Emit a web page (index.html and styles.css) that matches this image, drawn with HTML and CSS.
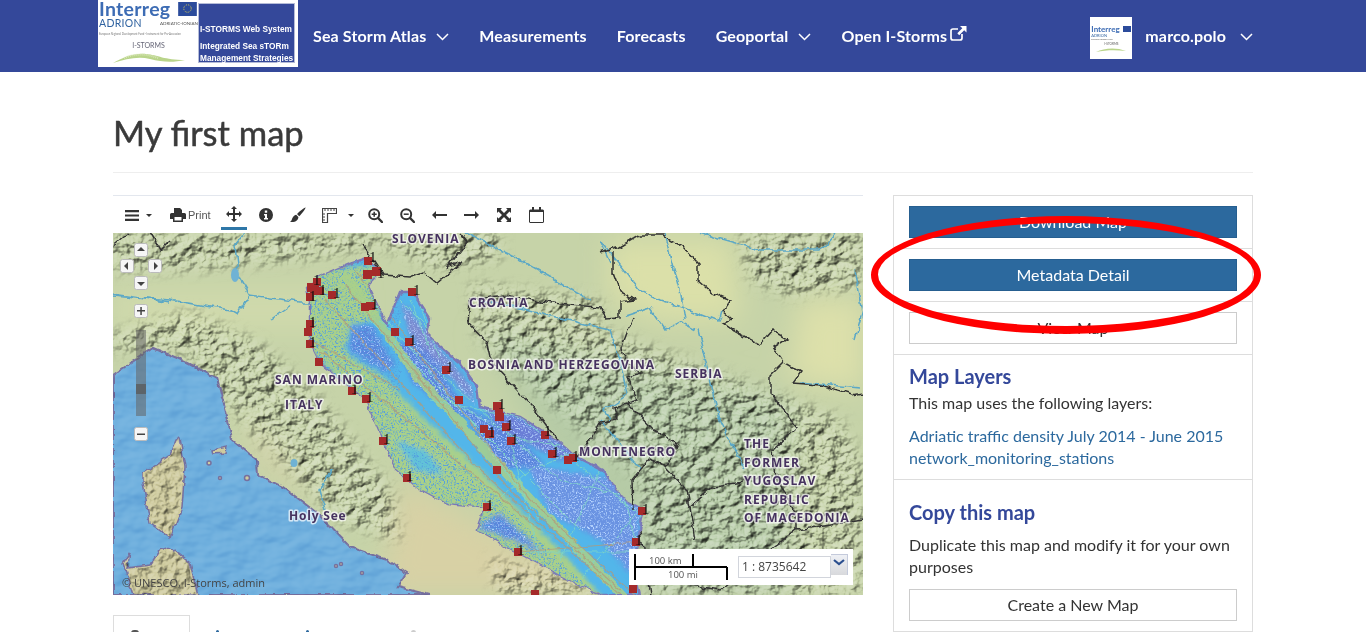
FILE: index.html
```html
<!DOCTYPE html>
<html lang="en">
<head>
<meta charset="utf-8">
<title>My first map</title>
<link rel="stylesheet" href="styles.css">
</head>
<body>
<header class="topbar">
  <a class="logo">
    <div class="logo-left">
      <div class="logo-row1"><span class="logo-interreg">Interreg</span><svg class="logo-flag" viewBox="0 0 20 15"><rect width="20" height="15" fill="#2b4b9b"/><circle cx="10" cy="7" r="4" fill="none" stroke="#e8d44a" stroke-width="1" stroke-dasharray="1 1.1"/></svg></div>
      <div class="logo-row2"><span class="logo-adrion">ADRION</span><span class="logo-ai">ADRIATIC-IONIAN</span></div>
      <div class="logo-micro">European Regional Development Fund - Instrument for Pre-Accession</div>
      <div class="logo-istorms">I-STORMS</div>
      <svg class="logo-wave" viewBox="0 0 74 13"><path d="M1 12C12 6 22 2 34 3S52 9 73 9C60 12 50 11 38 8S14 8 1 12Z" fill="#b9d48a"/><path d="M12 7C24 2 36 3 46 7" fill="none" stroke="#d8e6b8" stroke-width="2" stroke-dasharray="1 1"/></svg>
    </div>
    <div class="logo-box">
      <div class="logo-sys">I-STORMS Web System</div>
      <div class="logo-int">Integrated Sea sTORm<br>Management Strategies</div>
    </div>
  </a>
  <nav class="nav">
    <a class="nav-item">Sea Storm Atlas<svg class="chev" viewBox="0 0 13 8"><path d="M1 1l5.500 5.500L12 1"/></svg></a>
    <a class="nav-item">Measurements</a>
    <a class="nav-item">Forecasts</a>
    <a class="nav-item">Geoportal<svg class="chev" viewBox="0 0 13 8"><path d="M1 1l5.500 5.500L12 1"/></svg></a>
    <a class="nav-item nav-ext">Open I-Storms<svg class="ext" viewBox="0 0 17 16"><path d="M12 9v4a2 2 0 0 1-2 2H3a2 2 0 0 1-2-2V6a2 2 0 0 1 2-2h5" fill="none" stroke="#fff" stroke-width="1.700"/><path d="M10 1h6.500v6.500l-2.300-2.300-5 5-1.900-1.900 5-5z" fill="#fff"/></svg></a>
  </nav>
  <div class="user">
    <div class="avatar">
      <div class="av-row"><span class="av-int">Interreg</span><i class="av-flag"></i></div>
      <div class="av-adr">ADRION</div>
      <div class="av-micro">European Regional Fund</div>
      <div class="av-ist">I-STORMS</div>
      <svg class="av-wave" viewBox="0 0 30 5"><path d="M0 5C8 1 20 0 30 4 20 3 10 3 0 5Z" fill="#b9d48a"/></svg>
    </div>
    <a class="nav-item">marco.polo<svg class="chev" viewBox="0 0 13 8"><path d="M1 1l5.500 5.500L12 1"/></svg></a>
  </div>
</header>

<main class="page">
  <h1 class="title">My first map</h1>
  <div class="columns">
    <section class="viewer">
      <div class="toolbar">
        <span class="tb tb-menu"><svg width="14" height="11" viewBox="0 0 14 11"><path d="M0 0h14v2.200H0zM0 4.400h14v2.200H0zM0 8.800h14V11H0z" fill="#333"/></svg><i class="caret"></i></span>
        <span class="tb tb-print"><svg width="16" height="14" viewBox="0 0 16 14"><path d="M4 0h6l2 2v3H4zM1.500 5h13A1.500 1.500 0 0 1 16 6.500V11h-3v3H3v-3H0V6.500A1.500 1.500 0 0 1 1.500 5zM4.500 9v3.500h7V9z" fill="#333" fill-rule="evenodd"/></svg><span class="print-label">Print</span></span>
        <span class="tb tb-active"><svg width="16" height="16" viewBox="0 0 16 16"><path d="M8 0l3 3H9v4h4V5l3 3-3 3V9H9v4h2l-3 3-3-3h2V9H3v2L0 8l3-3v2h4V3H5z" fill="#333"/></svg></span>
        <span class="tb"><svg width="14" height="14" viewBox="0 0 14 14"><path d="M7 0a7 7 0 1 1 0 14A7 7 0 0 1 7 0zM5.800 2.500v2.200h2.400V2.500zM5 6v1.400h1V10H5v1.400h4V10H8V6z" fill="#333" fill-rule="evenodd"/></svg></span>
        <span class="tb"><svg width="16" height="16" viewBox="0 0 16 16"><path d="M15.500.5c.6.6-4 6.700-6.300 8.700L7 7C9 4.700 15 0 15.500.5zM6.200 7.800l2.200 2.200C8.300 13 6 15.500 0 15c2-1 1.500-3 3-5 .8-1.200 2-2 3.200-2.200z" fill="#333"/></svg></span>
        <span class="tb tb-ruler"><svg width="15" height="15" viewBox="0 0 15 15"><path d="M.5.500h14v5h-9v9h-5z" fill="none" stroke="#444" stroke-width="1.200"/><path d="M3 1v2M6 1v2M9 1v2M12 1v2M1 6h2M1 9h2M1 12h2" stroke="#444"/></svg><i class="caret"></i></span>
        <span class="tb"><svg width="15" height="15" viewBox="0 0 15 15"><circle cx="6.200" cy="6.200" r="5" fill="none" stroke="#333" stroke-width="2"/><path d="M10 10l4 4" stroke="#333" stroke-width="2.400" stroke-linecap="round"/><path d="M3.700 6.200h5M6.200 3.700v5" stroke="#333" stroke-width="1.500"/></svg></span>
        <span class="tb"><svg width="15" height="15" viewBox="0 0 15 15"><circle cx="6.200" cy="6.200" r="5" fill="none" stroke="#333" stroke-width="2"/><path d="M10 10l4 4" stroke="#333" stroke-width="2.400" stroke-linecap="round"/><path d="M3.700 6.200h5" stroke="#333" stroke-width="1.500"/></svg></span>
        <span class="tb"><svg width="15" height="8" viewBox="0 0 15 8"><path d="M0 4l4-4v3h11v2H4v3z" fill="#333"/></svg></span>
        <span class="tb"><svg width="15" height="8" viewBox="0 0 15 8"><path d="M15 4l-4-4v3H0v2h11v3z" fill="#333"/></svg></span>
        <span class="tb tb-wide"><svg width="14" height="14" viewBox="0 0 14 14"><path d="M0 0h5L3.500 1.500 7 5l3.500-3.500L9 0h5v5l-1.500-1.500L9 7l3.500 3.500L14 9v5H9l1.500-1.500L7 9l-3.500 3.500L5 14H0V9l1.500 1.500L5 7 1.500 3.500 0 5z" fill="#333"/></svg></span>
        <span class="tb"><svg width="15" height="16" viewBox="0 0 15 16"><path d="M1 3h13a.5.5 0 0 1 .5.5V15a.5.5 0 0 1-.5.500H1a.5.5 0 0 1-.5-.500V3.500A.5.5 0 0 1 1 3z" fill="none" stroke="#333"/><path d="M.5 3h14v2H.5zM3 0h2v4H3zM10 0h2v4h-2z" fill="#333"/></svg></span>
      </div>
      <div class="map">
        <svg class="map-svg" viewBox="113 233 750 362" width="750" height="362" xmlns="http://www.w3.org/2000/svg">
          <defs>
            <filter id="hill" x="0" y="0" width="100%" height="100%" color-interpolation-filters="sRGB">
              <feTurbulence type="fractalNoise" baseFrequency=".085 .1" numOctaves="4" seed="7" result="n"/>
              <feDiffuseLighting in="n" surfaceScale="5" diffuseConstant=".68" lighting-color="#fff" result="l"><feDistantLight azimuth="225" elevation="50"/></feDiffuseLighting>
              <feGaussianBlur in="SourceAlpha" stdDeviation="7" result="b"/>
              <feComposite in="l" in2="b" operator="in"/>
            </filter>
            <filter id="isle-hill" x="0" y="0" width="100%" height="100%" color-interpolation-filters="sRGB">
              <feTurbulence type="fractalNoise" baseFrequency=".09" numOctaves="4" seed="11" result="n"/>
              <feDiffuseLighting in="n" surfaceScale="4" diffuseConstant=".65" lighting-color="#fff" result="l"><feDistantLight azimuth="225" elevation="50"/></feDiffuseLighting>
              <feComposite in="l" in2="SourceAlpha" operator="in"/>
            </filter>
            <filter id="seahill" x="0" y="0" width="100%" height="100%" color-interpolation-filters="sRGB">
              <feTurbulence type="fractalNoise" baseFrequency=".03 .05" numOctaves="3" seed="3" result="n"/>
              <feDiffuseLighting in="n" surfaceScale="4" diffuseConstant=".65" lighting-color="#fff" result="l"><feDistantLight azimuth="225" elevation="50"/></feDiffuseLighting>
              <feComposite in="l" in2="SourceAlpha" operator="in"/>
            </filter>
            <filter id="soft" x="-20%" y="-20%" width="140%" height="140%"><feGaussianBlur stdDeviation="14"/></filter>
            <filter id="soft2" x="-20%" y="-20%" width="140%" height="140%"><feGaussianBlur stdDeviation="2.500"/></filter>
            <filter id="wiggle" x="-2%" y="-2%" width="104%" height="104%">
              <feTurbulence type="fractalNoise" baseFrequency=".09" numOctaves="3" seed="9" result="w"/>
              <feDisplacementMap in="SourceGraphic" in2="w" scale="7" xChannelSelector="R" yChannelSelector="G"/>
            </filter>
            <filter id="wiggle2" x="-2%" y="-2%" width="104%" height="104%">
              <feTurbulence type="fractalNoise" baseFrequency=".12" numOctaves="3" seed="2" result="w"/>
              <feDisplacementMap in="SourceGraphic" in2="w" scale="5" xChannelSelector="R" yChannelSelector="G"/>
            </filter>
            <filter id="speck" x="0" y="0" width="100%" height="100%" color-interpolation-filters="sRGB">
              <feTurbulence type="fractalNoise" baseFrequency=".75" numOctaves="2" seed="5"/>
              <feColorMatrix values="0 0 0 0 .72  0 0 0 0 .84  0 0 0 0 1  2.500 2.500 0 0 -2.500"/>
              <feComposite in2="SourceAlpha" operator="in"/>
            </filter>
            <filter id="speck2" x="0" y="0" width="100%" height="100%" color-interpolation-filters="sRGB">
              <feTurbulence type="fractalNoise" baseFrequency=".6" numOctaves="2" seed="8"/>
              <feColorMatrix values="0 0 0 0 .33  0 0 0 0 .62  0 0 0 0 .88  3 3 0 0 -3"/>
              <feComposite in2="SourceAlpha" operator="in"/>
            </filter>
            <clipPath id="adri"><path d="M307 288L317 278 347 265 367 258 380 272 367 285 380 312 387 325 400 292 413 292 430 318 427 335 460 363 477 387 480 407 520 417 557 440 577 457 603 470 620 497 643 510 640 530 633 563 640 595H600L560 575 517 552 477 530 483 513 490 507 447 503 417 487 397 470 383 440 365 398 320 363 310 343 310 322 310 302Z"/></clipPath>
          </defs>

          <rect class="land" x="113" y="233" width="750" height="362"/>
          <g filter="url(#soft)">
            <rect x="113" y="290" width="240" height="40" fill="#d0daac"/>
            <path d="M610 240H730L740 320 660 320 610 300Z" fill="#dbe0a9"/>
            <path d="M800 300H863V390L790 380Z" fill="#dde0aa"/>
            <path d="M400 480L520 545 640 595H380Z" fill="#d8d1a5"/>
            <path d="M240 410L290 470 320 510 260 460Z" fill="#d8d1a8"/>
            <path d="M480 330L790 400V595H640L540 440Z" fill="#b6cba6"/>
          </g>
          <g class="hills" filter="url(#hill)">
            <path d="M113 233H500V258L440 268 380 245 300 258 200 268 113 270Z"/>
            <path d="M113 335L190 312 260 345 320 400 390 490 400 540 340 520 260 440 180 350 113 350Z"/>
            <path d="M470 285L600 300 600 330 790 400 840 420 863 470V595H650L640 480 560 410 480 340Z"/>
            <path d="M740 233H863V285L790 295 750 280Z"/>
            <path d="M490 560L640 595H500Z"/>
          </g>

          <g filter="url(#wiggle2)">
            <path class="sea" d="M113 375L153 348 177 358 217 378 228 420 232 440 257 460 258 475 283 487 317 513 350 547 387 560 407 573 398 587 430 595H113Z"/>
          </g>
          <path class="sea-hills" filter="url(#seahill)" d="M113 375L153 348 177 358 217 378 228 420 232 440 257 460 258 475 283 487 317 513 350 547 387 560 407 573 398 587 430 595H113Z"/>
          <g filter="url(#wiggle2)">
            <path class="isle" d="M143 473L170 455 176 440 180 438 185 467 182 507 170 538 150 523 143 483Z"/>
            <path class="isle" d="M170 547L190 563 198 595H133L123 563 130 553 127 568 150 565 160 550Z"/>
            <path class="isle" d="M212 450L227 447 226 453 213 454Z"/>
          </g>
          <g class="isle-shade" filter="url(#isle-hill)">
            <path d="M145 473L170 457 176 442 180 440 183 467 180 507 170 536 152 523 145 483Z"/>
            <path d="M170 549L188 563 196 595H135L125 563 130 556 129 570 150 567 160 552Z"/>
          </g>
          <circle class="isle" cx="209" cy="463" r="2"/><circle class="isle" cx="220" cy="478" r="1.500"/><circle class="isle" cx="247" cy="478" r="2.500"/>
          <circle class="isle" cx="336" cy="566" r="1.500"/><circle class="isle" cx="341" cy="564" r="1.500"/><circle class="isle" cx="362" cy="573" r="1.500"/>

          <g class="rivers" filter="url(#wiggle)">
            <path d="M113 295L170 300 230 310 238 315 250 295 300 302 310 302"/>
            <path d="M113 293L140 297 170 302M238 275L235 245 245 233M250 295L240 278M270 320L290 306"/>
            <path d="M600 240L620 265 640 290 660 300 690 310 720 322 723 310M665 233L680 290 685 320M698 330L720 420 745 470"/>
            <path d="M625 316L650 308 665 330 680 322 695 330"/>
            <path d="M700 233L760 250 820 250 835 233M855 270L870 350M863 310L855 340"/>
            <path d="M480 300L560 318 610 330 620 360 627 395 605 410 610 420M600 240L610 262"/>
            <path d="M333 470L320 490 325 510M600 420L625 450 640 470M800 382L860 388"/>
            <path d="M465 233L520 260 590 300"/>
          </g>
          <ellipse class="lake" cx="235" cy="275" rx="4" ry="7"/>
          <ellipse class="lake" cx="294" cy="463" rx="3.500" ry="4"/>

          <g filter="url(#wiggle2)">
            <path class="coast-a" d="M307 288L317 278 347 265 367 258 380 272 367 285 380 312 387 325 400 292 413 292 430 318 427 335 460 363 477 387 480 407 520 417 557 440 577 457 603 470 620 497 643 510 640 530 633 563 640 595H600L560 575 517 552 477 530 483 513 490 507 447 503 417 487 397 470 383 440 365 398 320 363 310 343 310 322 310 302Z"/>
            <g clip-path="url(#adri)">
              <g filter="url(#soft2)">
                <path d="M300 270L380 265 378 318 350 325 345 352 385 378 420 415 470 460 560 550 640 640 540 600 470 535 380 475 340 380 300 340Z" fill="#a9d08a"/>
                <path d="M395 440L425 450 445 475 415 470Z" fill="#62c2d8"/>
                <path d="M352 326L372 326 395 365 385 372 350 350Z" fill="#5a84dc"/>
                <path d="M396 345L425 340 455 395 470 420 450 410 415 385Z" fill="#5a84dc"/>
                <path d="M460 405L510 430 545 465 500 470Z" fill="#5a84dc"/>
                <path d="M527 465L617 480 640 513 633 577 600 540 550 513Z" fill="#6a93e2"/>
                <path d="M477 527L500 513 545 555 513 540Z" fill="#5a84dc"/>
                <path d="M400 300L425 330 470 385 475 405 440 365 410 335Z" fill="#7a8ad0"/>
                <path d="M480 407L520 417 557 440 577 457 560 460 510 435Z" fill="#6a7ed6"/>
              </g>
              <path class="specks" d="M352 326L372 326 395 365 385 372 350 350ZM396 345L425 340 455 395 470 420 450 410 415 385ZM527 465L617 480 640 513 633 577 600 540 550 513ZM400 300L425 330 470 385 475 405 440 365 410 335ZM477 527L500 513 545 555 513 540ZM460 405L510 430 545 465 500 470ZM480 407L520 417 557 440 577 457 560 460 510 435Z" filter="url(#speck)"/>
              <path class="specks" d="M300 260H400V400L560 560 640 640H520L300 400Z" filter="url(#speck2)"/>
              <path class="band" d="M345 275L420 380 560 530 650 625"/>
              <g class="traffic-green">
                <path d="M400 300L500 400 645 520M430 400L640 440M370 320L470 420 540 520M600 470L560 560M620 480L640 560M480 410L560 480 640 500M490 507L530 470 600 440M518 552H640M640 510L580 580M510 440L540 560M400 320L395 345M420 305L440 360"/>
                <path d="M370 300L470 420 580 530M380 320L470 400M410 300L430 350M460 410L500 450M440 395L520 440 560 445"/>
              </g>
              <g class="traffic-tan">
                <path d="M325 300L480 470 620 595M345 285L510 490 620 590M355 270L530 500 640 600"/>
                <path d="M320 350L420 430 540 530M310 340L400 390M518 552L640 542"/>
              </g>
            </g>
          </g>

          <g class="borders" filter="url(#wiggle)">
            <path d="M600 253L620 247 640 235 663 235 683 247 698 263 698 280 713 293 730 300 723 310 732 318 723 323 737 333 760 345 773 330 787 338 773 347 783 362 800 372 792 383 820 385 853 395 863 393"/>
            <path d="M783 362L770 375 770 393 797 427 773 450 777 477 797 517 797 530"/>
            <path d="M613 253L613 273 620 292 635 300 620 302 620 317 607 318 600 307 567 305 533 300M633 318L622 347 625 363 643 373 627 377 638 400 613 407 617 420 600 422 590 440 577 457"/>
            <path d="M627 403L653 430 677 443 672 457 665 467 687 490 690 507 713 487 743 483M665 467L650 458 632 480 633 510"/>
            <path d="M470 300L468 323 487 343 490 357 500 372 533 407 557 440"/>
            <path d="M533 300L505 295 470 300"/>
            <path d="M363 245L372 258 383 275 410 277 423 272 437 283 463 262 447 268 467 242 460 233"/>
            <path d="M113 245L128 233M150 233L160 250 170 240M690 507L695 540M640 530L650 595M690 585L720 590 797 530 863 520"/>
          </g>

          <g class="pins">
            <g><rect x="364" y="257" width="8" height="8"/><text x="369" y="262">1</text></g>
            <rect x="363" y="270" width="9" height="9"/><g><rect x="372" y="267" width="9" height="9"/><text x="377" y="278">1</text></g>
            <rect x="307" y="283" width="9" height="9"/><rect x="310" y="286" width="9" height="9"/><g><rect x="313" y="278" width="8" height="8"/><text x="313" y="285">1</text></g>
            <g><rect x="306" y="293" width="8" height="8"/><text x="309" y="301">1</text></g>
            <g><rect x="316" y="287" width="8" height="8"/><text x="319" y="295">1</text></g>
            <g><rect x="328" y="291" width="8" height="8"/><text x="333" y="298">1</text></g>
            <rect x="361" y="303" width="8" height="8"/><g><rect x="366" y="302" width="9" height="8"/><text x="371" y="309">1</text></g>
            <g><rect x="408" y="288" width="8" height="8"/><text x="413" y="295">1</text></g>
            <rect x="391" y="328" width="8" height="8"/>
            <g><rect x="405" y="338" width="8" height="8"/><text x="409" y="345">1</text></g>
            <g><rect x="306" y="320" width="8" height="8"/><text x="309" y="327">1</text></g>
            <rect x="304" y="328" width="8" height="8"/>
            <g><rect x="306" y="340" width="8" height="8"/><text x="309" y="347">1</text></g>
            <rect x="315" y="358" width="8" height="8"/>
            <g><rect x="442" y="366" width="8" height="8"/><text x="446" y="372">1</text></g>
            <rect x="455" y="396" width="8" height="8"/>
            <g><rect x="348" y="387" width="8" height="8"/><text x="351" y="394">1</text></g>
            <g><rect x="362" y="395" width="8" height="8"/><text x="366" y="402">1</text></g>
            <g><rect x="379" y="437" width="8" height="8"/><text x="383" y="444">1</text></g>
            <g><rect x="493" y="402" width="9" height="8"/><text x="498" y="409">1</text></g>
            <rect x="495" y="413" width="9" height="8"/><rect x="495" y="409" width="8" height="8"/>
            <g><rect x="502" y="423" width="8" height="8"/><text x="506" y="430">1</text></g>
            <rect x="480" y="425" width="8" height="8"/>
            <g><rect x="485" y="430" width="9" height="8"/><text x="488" y="437">1</text></g>
            <g><rect x="507" y="437" width="8" height="8"/><text x="511" y="444">1</text></g>
            <g><rect x="541" y="431" width="8" height="8"/><text x="544" y="436">1</text></g>
            <g><rect x="548" y="450" width="8" height="8"/><text x="552" y="457">1</text></g>
            <rect x="564" y="456" width="8" height="8"/><g><rect x="569" y="454" width="8" height="8"/><text x="572" y="461">1</text></g>
            <rect x="493" y="466" width="8" height="8"/>
            <g><rect x="403" y="474" width="8" height="8"/><text x="406" y="481">1</text></g>
            <g><rect x="483" y="503" width="8" height="8"/><text x="486" y="510">1</text></g>
            <g><rect x="514" y="548" width="8" height="8"/><text x="517" y="555">1</text></g>
            <g><rect x="638" y="507" width="8" height="8"/><text x="642" y="514">1</text></g>
            <g><rect x="632" y="538" width="8" height="8"/><text x="635" y="545">1</text></g>
            <rect x="629" y="585" width="8" height="8"/>
            <rect x="531" y="590" width="8" height="8"/>
          </g>

          <g class="labels">
            <text x="392" y="243">SLOVENIA</text>
            <text x="469" y="307">CROATIA</text>
            <text x="468" y="369">BOSNIA AND HERZEGOVINA</text>
            <text x="675" y="378">SERBIA</text>
            <text x="579" y="456">MONTENEGRO</text>
            <text x="744" y="448">THE</text>
            <text x="744" y="467">FORMER</text>
            <text x="744" y="485">YUGOSLAV</text>
            <text x="744" y="504">REPUBLIC</text>
            <text x="744" y="522">OF MACEDONIA</text>
            <text x="275" y="384">SAN MARINO</text>
            <text x="285" y="409">ITALY</text>
            <text x="289" y="520" class="label-lower">Holy See</text>
          </g>

          <g class="pan">
            <rect x="134.500" y="243.500" width="13" height="13" rx="2"/><path class="ar" d="M141 247l4 4h-8z"/>
            <rect x="120.500" y="259.500" width="13" height="13" rx="2"/><path class="ar" d="M124 266l4-4v8z"/>
            <rect x="148.500" y="259.500" width="13" height="13" rx="2"/><path class="ar" d="M158 266l-4-4v8z"/>
            <rect x="134.500" y="276.500" width="13" height="13" rx="2"/><path class="ar" d="M141 286l4-4h-8z"/>
            <rect x="134.500" y="304.500" width="13" height="13" rx="2"/><path class="ar" d="M137 310h8v1.500h-8zM140.300 307h1.500v8h-1.500z"/>
            <rect x="134.500" y="427.500" width="13" height="13" rx="2"/><path class="ar" d="M137 433.500h8v1.500h-8z"/>
            <rect class="zoombar" x="136" y="330" width="10" height="86"/>
            <rect class="zoomhandle" x="136" y="384" width="10" height="10"/>
          </g>
          <text class="attrib" x="122" y="587">© UNESCO, I-Storms, admin</text>
        </svg>
        <div class="scale-box">
          <svg class="scale-svg" width="96" height="30" viewBox="0 0 96 30"><path d="M2 0v26M2 13h92M60 0v13M94 13v13" fill="none" stroke="#000" stroke-width="2"/><text x="16" y="10">100 km</text><text x="35" y="24">100 mi</text></svg>
          <div class="scale-combo"><span class="scale-input">1 : 8735642</span><span class="scale-btn"><svg width="12" height="7" viewBox="0 0 12 7"><path d="M1 1l5 4 5-4" fill="none" stroke="#2b4f8f" stroke-width="2.200"/></svg></span></div>
        </div>
      </div>
      <div class="tabs">
        <div class="tab tab-on"><i class="tab-dot tab-dark"></i></div>
        <div class="tab tab-1"><i class="tab-dot tab-blue"></i></div>
        <div class="tab tab-2"><i class="tab-dot tab-blue"></i></div>
        <div class="tab tab-3"><i class="tab-dot tab-grey"></i></div>
      </div>
    </section>

    <aside class="side">
      <div class="side-sec"><a class="btn btn-primary">Download Map</a></div>
      <div class="side-sec"><a class="btn btn-primary">Metadata Detail</a></div>
      <div class="side-sec"><a class="btn btn-plain">View Map</a></div>
      <div class="side-sec side-layers">
        <h3 class="side-h">Map Layers</h3>
        <p class="side-p">This map uses the following layers:</p>
        <a class="side-link">Adriatic traffic density July 2014 - June 2015</a>
        <a class="side-link">network_monitoring_stations</a>
      </div>
      <div class="side-sec side-copy">
        <h3 class="side-h">Copy this map</h3>
        <p class="side-p side-p2">Duplicate this map and modify it for your own purposes</p>
        <a class="btn btn-plain">Create a New Map</a>
      </div>
    </aside>
  </div>
</main>

<svg class="annotation" width="1366" height="632" viewBox="0 0 1366 632"><path fill="#f00" fill-rule="evenodd" d="M871 275a195 59 0 1 0 390 0a195 59 0 1 0-390 0ZM878 274.500a188 51.500 0 1 1 376 0a188 51.500 0 1 1-376 0Z"/></svg>
</body>
</html>
```

FILE: styles.css
```css
html, body { margin: 0; padding: 0; height: 632px; overflow: hidden; background: #fff; }
body { font-family: Lato, "Open Sans", sans-serif; font-size: 16px; color: #333; position: relative; }
a { text-decoration: none; color: inherit; }

.topbar { height: 72px; background: #34489a; display: flex; align-items: flex-start; padding: 0 113px 0 98px; color: #fff; }

.logo { width: 200px; height: 67px; background: #fff; display: flex; flex: none; }
.logo-left { width: 100px; padding: 1px 0 0 1px; box-sizing: border-box; }
.logo-row1 { display: flex; justify-content: space-between; align-items: flex-start; height: 17px; padding-right: 1px; }
.logo-interreg { font-size: 19.500px; font-weight: 700; line-height: 16px; color: #3d6cb4; letter-spacing: .3px; }
.logo-flag { width: 19px; height: 14px; margin-top: 1px; }
.logo-row2 { display: flex; justify-content: space-between; align-items: center; height: 11px; }
.logo-adrion { font-size: 10.500px; line-height: 11px; color: #2f62a0; letter-spacing: .3px; }
.logo-ai { font-size: 4.500px; color: #555; white-space: nowrap; }
.logo-micro { font-size: 2.700px; color: #777; line-height: 6px; margin-top: 2px; white-space: nowrap; }
.logo-istorms { font-size: 7px; color: #667; text-align: center; line-height: 8px; margin-top: 4px; }
.logo-wave { display: block; width: 74px; height: 13px; margin: 2px 0 0 13px; }
.logo-box { width: 97px; height: 60px; margin: 3px 0 0 0; background: #34489a; border: 1px solid #b5bcd8; box-sizing: border-box; font-family: "Liberation Sans", sans-serif; font-weight: 700; color: #fff; padding: 20px 0 0 1px; white-space: nowrap; }
.logo-sys { font-size: 8.300px; line-height: 11px; }
.logo-int { font-size: 8.300px; line-height: 12px; margin-top: 5px; }

.nav { display: flex; gap: 30px; margin-left: 15px; height: 70px; align-items: center; }
.nav-item { font-size: 16px; font-weight: 700; letter-spacing: .14px; color: #fff; display: flex; align-items: center; white-space: nowrap; }
.chev { width: 13px; height: 8px; margin: 3px 0 0 10px; fill: none; stroke: #fff; stroke-width: 1.500; }
.ext { width: 17px; height: 16px; margin: -4px 0 0 3px; }

.user { margin-left: auto; display: flex; align-items: center; height: 70px; gap: 13px; }
.user .chev { margin-left: 14px; }
.avatar { width: 42px; height: 42px; background: #fff; box-sizing: border-box; padding: 8px 1px 0; overflow: hidden; color: #555; margin-top: 6px; }
.av-row { display: flex; justify-content: space-between; align-items: center; height: 8px; }
.av-int { font-size: 8px; font-weight: 700; color: #3d6cb4; line-height: 8px; }
.av-flag { display: block; width: 8px; height: 6px; background: #2b4b9b; }
.av-adr { font-size: 4px; line-height: 5px; color: #2f62a0; }
.av-micro { font-size: 2px; line-height: 3px; white-space: nowrap; }
.av-ist { font-size: 3px; line-height: 5px; text-align: center; margin-top: 1px; }
.av-wave { display: block; width: 30px; height: 5px; margin: 0 auto; }

.page { width: 1140px; margin: 0 auto; }
.title { margin: 0; padding: 41px 0 19px; font-size: 34.500px; line-height: 40px; font-weight: 400; -webkit-text-stroke: .5px #3a3a3a; color: #3a3a3a; border-bottom: 1px solid #eee; }
.columns { display: flex; gap: 30px; align-items: flex-start; margin-top: 22px; }

.viewer { width: 750px; flex: none; }
.toolbar { height: 37px; border-top: 1px solid #e3e7ee; display: flex; align-items: center; }
.tb { width: 32px; height: 37px; flex: none; display: flex; align-items: center; justify-content: center; box-sizing: border-box; padding-top: 1px; }
.tb-menu { width: 44px; justify-content: flex-start; padding-left: 12px; gap: 7px; }
.tb-print { width: 61px; justify-content: flex-start; padding-left: 13px; gap: 2px; }
.print-label { font: 11px "Liberation Sans", sans-serif; color: #555; }
.tb-active { box-shadow: inset 0 -3px 0 #2e77a8; width: 26px; margin: 0 3px 3px; height: 34px; }
.tb-ruler { width: 45px; justify-content: flex-start; padding-left: 8px; gap: 11px; }
.tb-wide { width: 33px; }
.caret { display: block; width: 0; height: 0; border: 3px solid transparent; border-top: 3px solid #333; border-bottom: 0; }

.map { width: 750px; height: 362px; position: relative; overflow: hidden; background: #c5d0a0; }
.map-svg { display: block; }
.land { fill: #c6d3a8; }
.hills { fill: #000; mix-blend-mode: hard-light; opacity: .8; }
.sea { fill: #70b0de; stroke: #76709f; stroke-width: 2; }
.sea-hills { mix-blend-mode: soft-light; opacity: .6; }
.isle { fill: #cfcb9e; stroke: #76709f; stroke-width: 1.500; }
.isle-shade { mix-blend-mode: hard-light; opacity: .7; }
.rivers path { fill: none; stroke: #5ca8c6; stroke-width: 1.500; }
.lake { fill: #6fb2d4; }
.coast-a { fill: #52b6ea; stroke: #7a78b6; stroke-width: 2.500; }
.specks { fill: #000; }
.band { fill: none; stroke: #a9d08a; stroke-width: 9; opacity: .85; }
.traffic-green path { fill: none; stroke: #7fd6c6; stroke-width: 1; opacity: .85; }
.traffic-tan path { fill: none; stroke: #b39a78; stroke-width: 1.200; opacity: .75; }
.borders path { fill: none; stroke: #333; stroke-width: 1.500; }
.pins rect { fill: #a52a2a; }
.pins text { font: 15px "Liberation Serif", serif; fill: #111; }
.labels text { font: 700 12px "Open Sans", sans-serif; letter-spacing: 1px; fill: #46325f; stroke: rgba(255,255,255,.7); stroke-width: 3px; paint-order: stroke; stroke-linejoin: round; }
.labels .label-lower { letter-spacing: .8px; }
.pan rect { fill: #f6f6f6; stroke: #bbb; }
.pan .ar { fill: #444; }
.pan .zoombar { fill: rgba(100,100,100,.55); stroke: none; }
.pan .zoomhandle { fill: rgba(90,90,90,.75); stroke: none; }
.attrib { font: 11px "Open Sans", sans-serif; fill: #444; }

.scale-box { position: absolute; left: 516px; top: 316px; width: 224px; height: 36px; background: #fff; display: flex; align-items: flex-start; }
.scale-svg { flex: none; margin: 5px 0 0 4px; }
.scale-svg text { font: 9.500px "Open Sans", sans-serif; fill: #555; }
.scale-combo { display: flex; margin: 5px 0 0 9px; align-items: flex-start; }
.scale-input { width: 93px; height: 22px; box-sizing: border-box; border: 1px solid #d2d5dc; font: 12px "Open Sans", sans-serif; color: #444; line-height: 20px; padding-left: 3px; margin-top: 2px; }
.scale-btn { width: 17px; height: 21px; box-sizing: border-box; border: 1px solid #c4cadb; border-bottom: 0; border-left: 0; background: linear-gradient(#eef0f5, #d8d9dc); display: flex; justify-content: center; padding-top: 4px; }

.tabs { display: flex; margin-top: 20px; height: 60px; }
.tab { height: 60px; box-sizing: border-box; padding-top: 15px; }
.tab-on { width: 77px; border: 1px solid #ddd; border-bottom: 0; padding: 14px 0 0 17px; }
.tab-1 { margin-left: 26px; width: 90px; }
.tab-2 { width: 105px; }
.tab-3 { width: 20px; }
.tab-dot { display: block; width: 5px; height: 4px; border-radius: 3px 3px 0 0; }
.tab-dark { width: 8px; background: #555; }
.tab-blue { width: 3px; background: #2c699e; }
.tab-grey { background: #ccc; }

.side { width: 360px; flex: none; box-sizing: border-box; border: 1px solid #ddd; border-bottom: 0; }
.side-sec { padding: 10px 15px; border-bottom: 1px solid #ddd; }
.btn { display: block; height: 32px; box-sizing: border-box; line-height: 30px; text-align: center; font-size: 16px; border: 1px solid #ccc; color: #333; }
.btn-primary { background: #2c699e; border-color: #265f90; color: #fff; }
.side-layers { padding-top: 10px; }
.side-h { margin: 0; font-size: 20px; line-height: 22px; font-weight: 700; color: #34489a; }
.side-p { margin: 5px 0 11px; line-height: 22px; font-size: 16px; color: #333; }
.side-link { display: block; color: #2c699e; line-height: 22px; font-size: 16px; white-space: nowrap; }
.side-copy { padding-top: 21px; }
.side-p2 { margin: 11px 0 11px; }

.annotation { position: absolute; left: 0; top: 0; pointer-events: none; }
```
